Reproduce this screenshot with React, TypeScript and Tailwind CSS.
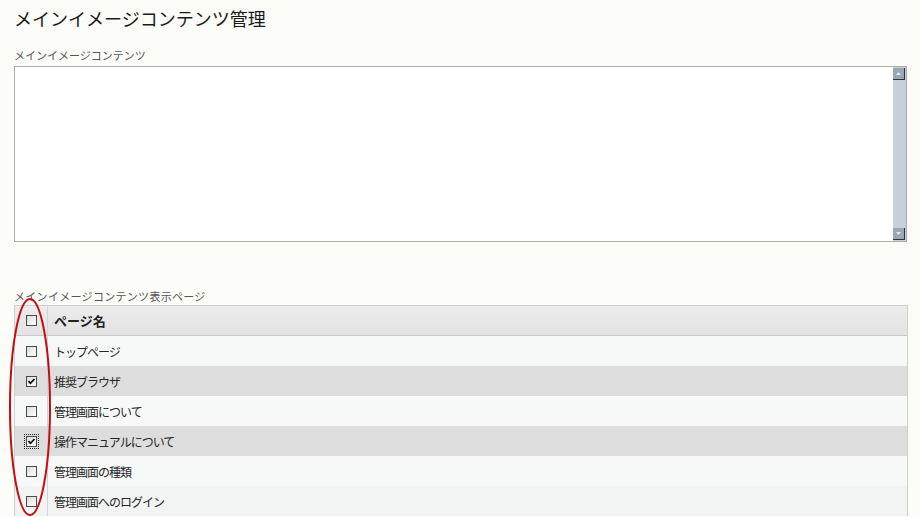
import type { ReactNode } from "react";

const pages = [
  { name: "トップページ", checked: false, bg: "bg-[#f7f8f8]" },
  { name: "推奨ブラウザ", checked: true, bg: "bg-[#dcdddc]" },
  { name: "管理画面について", checked: false, bg: "bg-[#f7f8f8]" },
  { name: "操作マニュアルについて", checked: true, bg: "bg-[#dcdddc]", focus: true },
  { name: "管理画面の種類", checked: false, bg: "bg-[#f7f8f8]" },
  { name: "管理画面へのログイン", checked: false, bg: "bg-[#f2f3f3]" },
];

function Box({ checked, focus }: { checked: boolean; focus?: boolean }) {
  const box = (
    <span className="flex h-[11px] w-[11px] items-center justify-center border border-[#4a4a4a] bg-gradient-to-br from-[#dcdcdc] to-white">
      {checked && (
        <svg width="9" height="9" viewBox="0 0 9 9">
          <path d="M1.5 4.2 L3.5 6.3 L7.5 2" fill="none" stroke="#111" strokeWidth="1.8" />
        </svg>
      )}
    </span>
  );
  if (!focus) return box;
  return <span className="border border-dotted border-[#222] p-[1px]">{box}</span>;
}

function Row({ bg, children, box }: { bg: string; children: ReactNode; box: ReactNode }) {
  return (
    <div className={`flex h-[30px] items-center ${bg}`}>
      <div className="flex h-full w-[33px] items-center justify-center border-r border-[#d4d4d4] pl-[1px]">{box}</div>
      <div className="pb-[2px] pl-[6px]">{children}</div>
    </div>
  );
}

function ScrollButton({ up }: { up?: boolean }) {
  return (
    <div className="flex h-[12px] w-[12px] items-center justify-center border-r border-b border-[#2d3338] bg-[#9aa6b1]">
      <svg width="7" height="5" viewBox="0 0 7 5">
        {up ? <path d="M3.5 1 L6 4 L1 4 Z" fill="#e4eaf0" /> : <path d="M1 1 L6 1 L3.5 4 Z" fill="#e4eaf0" />}
      </svg>
    </div>
  );
}

export default function App() {
  return (
    <div
      className="min-h-[517px] w-[920px] bg-[#fcfcf8] pl-[14px] text-[#333]"
      style={{ fontFamily: '"Noto Sans CJK JP", "Noto Sans", sans-serif' }}
    >
      <h1 className="pt-[6px] text-[18px] leading-[24px] font-normal text-[#1a1a1a]">メインイメージコンテンツ管理</h1>

      <p className="mt-[18px] text-[11px] leading-[14px] text-[#555]">メインイメージコンテンツ</p>
      <div className="mt-[4px] flex h-[176px] w-[893px] border border-[#acacac] bg-white">
        <textarea className="flex-1 resize-none bg-white outline-none" />
        <div className="flex w-[13px] flex-col justify-between bg-[#c8d1da] pt-[1px] pb-[1px]">
          <ScrollButton up />
          <ScrollButton />
        </div>
      </div>

      <p className="mt-[47px] text-[11px] leading-[14px] tracking-[0.3px] text-[#555]">メインイメージコンテンツ表示ページ</p>
      <div className="relative mt-[2px] w-[894px]">
        <div className="border-x border-t border-[#cfcfcf]">
          <div className="flex h-[30px] items-center border-b border-[#c8c8c8] bg-gradient-to-b from-[#ececec] to-[#e3e3e3]">
            <div className="flex h-full w-[33px] items-center justify-center border-r border-[#d4d4d4] pl-[1px]">
              <Box checked={false} />
            </div>
            <div className="pl-[6px] text-[13px] font-bold text-[#222]">ページ名</div>
          </div>
          {pages.map((p) => (
            <Row key={p.name} bg={p.bg} box={<Box checked={p.checked} focus={p.focus} />}>
              <span className="text-[12px] tracking-[-1px] text-[#262626]">{p.name}</span>
            </Row>
          ))}
        </div>
        <svg className="pointer-events-none absolute left-[-8px] top-[-8px]" width="50" height="230" viewBox="0 0 50 230">
          <ellipse cx="24" cy="110" rx="20" ry="108" fill="none" stroke="#c40c14" strokeWidth="2" />
        </svg>
      </div>
    </div>
  );
}
